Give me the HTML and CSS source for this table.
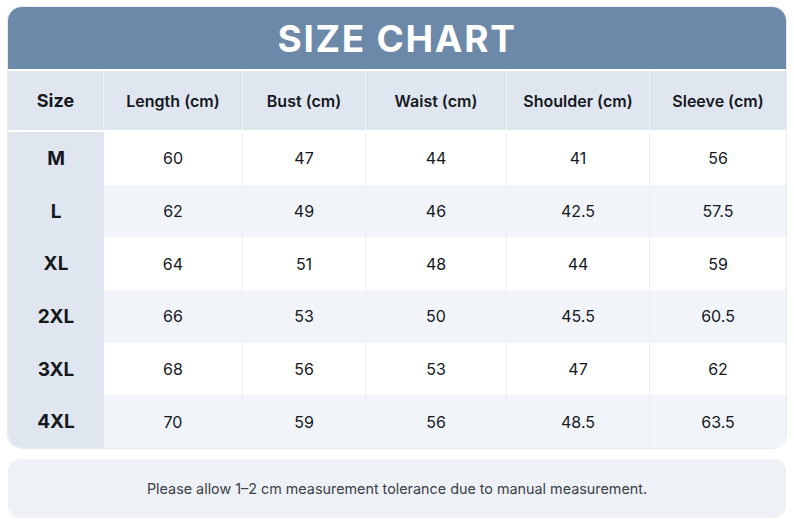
FILE: index.html
```html
<!DOCTYPE html>
<html>
<head>
<meta charset="utf-8">
<link rel="stylesheet" href="styles.css">
</head>
<body>
<div class="page">
  <div class="card">
    <div class="title">SIZE CHART</div>
    <div class="grid">
      <div class="c hd size">Size</div>
      <div class="c hd">Length (cm)</div>
      <div class="c hd">Bust (cm)</div>
      <div class="c hd">Waist (cm)</div>
      <div class="c hd">Shoulder (cm)</div>
      <div class="c hd last">Sleeve (cm)</div>

      <div class="c sz">M</div><div class="c">60</div><div class="c">47</div><div class="c">44</div><div class="c">41</div><div class="c last">56</div>
      <div class="c sz">L</div><div class="c alt">62</div><div class="c alt">49</div><div class="c alt">46</div><div class="c alt">42.5</div><div class="c alt last">57.5</div>
      <div class="c sz">XL</div><div class="c">64</div><div class="c">51</div><div class="c">48</div><div class="c">44</div><div class="c last">59</div>
      <div class="c sz">2XL</div><div class="c alt">66</div><div class="c alt">53</div><div class="c alt">50</div><div class="c alt">45.5</div><div class="c alt last">60.5</div>
      <div class="c sz">3XL</div><div class="c">68</div><div class="c">56</div><div class="c">53</div><div class="c">47</div><div class="c last">62</div>
      <div class="c sz">4XL</div><div class="c alt">70</div><div class="c alt">59</div><div class="c alt">56</div><div class="c alt">48.5</div><div class="c alt last">63.5</div>
    </div>
  </div>
  <div class="note">Please allow 1–2 cm measurement tolerance due to manual measurement.</div>
</div>
</body>
</html>
```

FILE: styles.css
```css
html, body {
  margin: 0;
  padding: 0;
  background: #ffffff;
}
body {
  font-family: Inter, "Liberation Sans", Arial, sans-serif;
  color: #15181c;
}
.page {
  padding: 7px 8px 0 8px;
  width: 778px;
}
.card {
  border-radius: 14px;
  overflow: hidden;
  background: #ffffff;
  box-shadow: 0 0 0 1px #e8ecf2;
}
.title {
  height: 62px;
  background: #6d89aa;
  color: #ffffff;
  font-weight: 700;
  font-size: 37px;
  letter-spacing: 1.7px;
  display: flex;
  align-items: center;
  justify-content: center;
  padding-top: 1px;
  box-sizing: border-box;
}
.grid {
  display: grid;
  grid-template-columns: 96px 139px 123px 141px 143px 136px;
  grid-template-rows: 61px repeat(6, 52.7px);
  padding-top: 2px;
  background: #ffffff;
}
.c {
  display: flex;
  align-items: center;
  justify-content: center;
  font-size: 16px;
  border-right: 1px solid #eceff4;
  background: #ffffff;
}
.c.last { border-right: none; }
.c.alt { background: #f1f4f9; }
.hd {
  background: #dfe6f0;
  font-weight: 600;
  font-size: 16px;
  border-right: 1px solid #eef1f6;
  border-bottom: 2px solid #ffffff;
}
.hd.size {
  font-size: 18px;
  font-weight: 700;
}
.sz {
  background: #dfe6f0;
  font-weight: 700;
  font-size: 19px;
  border-right: none;
}
.note {
  margin-top: 11px;
  height: 59px;
  border-radius: 12px;
  background: #eef1f6;
  display: flex;
  align-items: center;
  justify-content: center;
  font-size: 14.35px;
  color: #3a3f47;
}
```
